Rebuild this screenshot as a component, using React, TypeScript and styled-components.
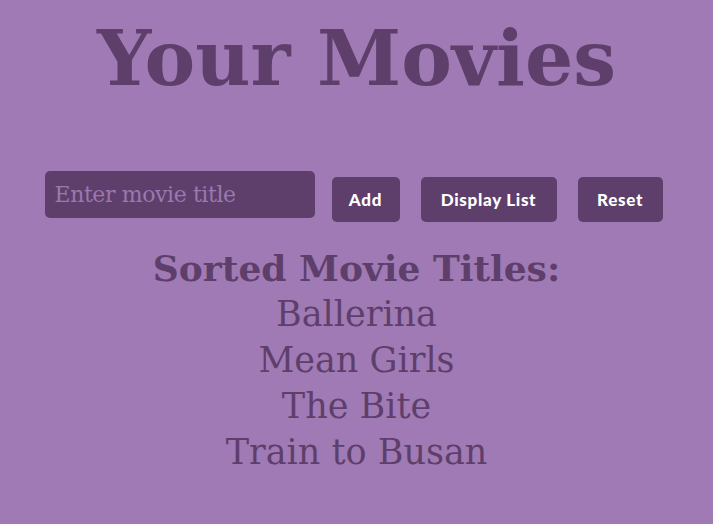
import React from "react";
import styled, { createGlobalStyle } from "styled-components";

const Global = createGlobalStyle`
  html, body { margin: 0; padding: 0; background: #a07ab4; }
  body { font-family: "DejaVu Serif", Georgia, serif; color: #5e3f6b; }
`;

const Page = styled.main`
  display: flex;
  flex-direction: column;
  align-items: center;
  min-height: 524px;
`;

const Title = styled.h1`
  margin: 12px 0 0;
  font-size: 76px;
  line-height: 94px;
  font-weight: 700;
`;

const Controls = styled.div`
  display: flex;
  align-items: flex-start;
  margin-top: 65px;
  margin-left: -6px;
`;

const Input = styled.input`
  box-sizing: border-box;
  width: 270px;
  height: 47px;
  border: none;
  border-radius: 5px;
  background: #5e3f6b;
  color: #fff;
  padding: 0 10px;
  font-family: "DejaVu Serif", Georgia, serif;
  font-size: 22px;
  letter-spacing: -0.4px;
  outline: none;
  &::placeholder { color: #9a78b0; }
`;

const Button = styled.button<{ $w: number; $ml: number }>`
  box-sizing: border-box;
  width: ${(p) => p.$w}px;
  height: 45px;
  margin-top: 6px;
  margin-left: ${(p) => p.$ml}px;
  padding: 0;
  border: none;
  border-radius: 5px;
  background: #5e3f6b;
  color: #fff;
  font-family: "Lato", sans-serif;
  font-weight: 900;
  font-size: 17px;
  letter-spacing: 0.7px;
  cursor: pointer;
`;

const Heading = styled.h2`
  margin: 23px 0 0;
  font-size: 36px;
  line-height: 46px;
  font-weight: 700;
`;

const List = styled.ul`
  list-style: none;
  margin: 0;
  padding: 0;
  text-align: center;
`;

const Item = styled.li`
  font-size: 35px;
  line-height: 46px;
`;

const movies = ["Ballerina", "Mean Girls", "The Bite", "Train to Busan"];

export default function App() {
  return (
    <>
      <Global />
      <Page>
        <Title>Your Movies</Title>
        <Controls>
          <Input placeholder="Enter movie title" />
          <Button $w={68} $ml={17}>Add</Button>
          <Button $w={136} $ml={21}>Display List</Button>
          <Button $w={85} $ml={21}>Reset</Button>
        </Controls>
        <Heading>Sorted Movie Titles:</Heading>
        <List>
          {movies.map((m) => (
            <Item key={m}>{m}</Item>
          ))}
        </List>
      </Page>
    </>
  );
}
